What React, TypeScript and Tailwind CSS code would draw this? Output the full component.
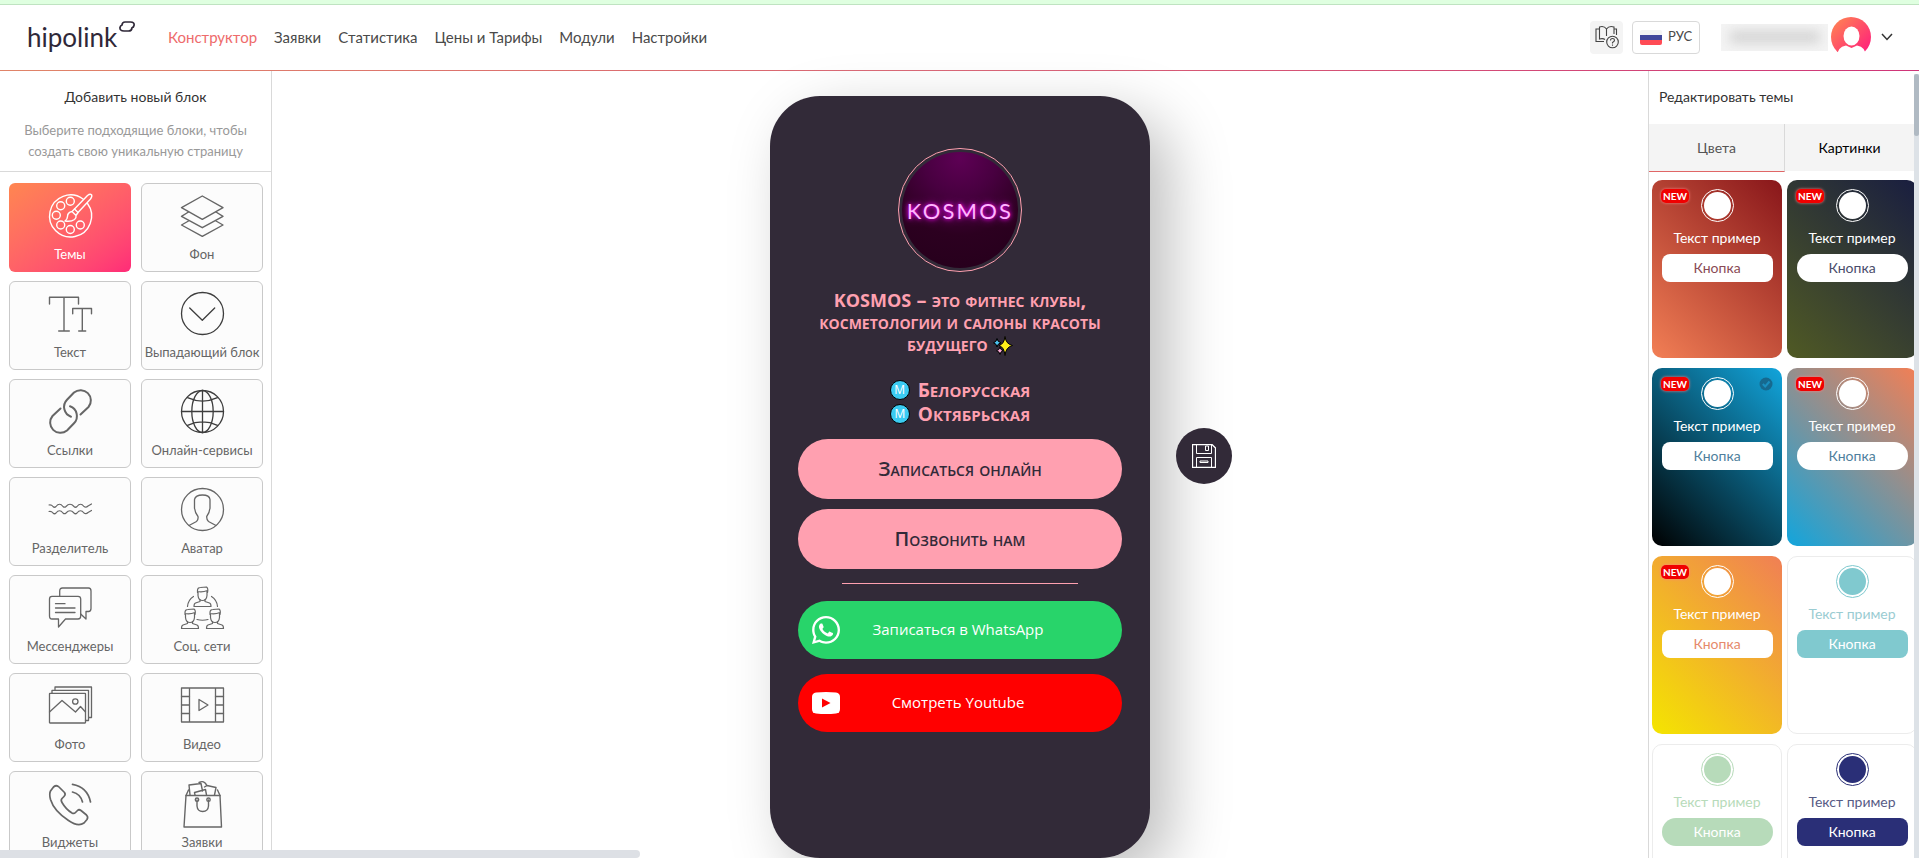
import type { ReactNode } from 'react';
import { FaWhatsapp } from 'react-icons/fa';

const navItems = ['Конструктор', 'Заявки', 'Статистика', 'Цены и Тарифы', 'Модули', 'Настройки'];

// Wrapper for all the block icons, same 43px box
function Icon({ children, width = 1.2 }: { children: ReactNode; width?: number }) {
  return (
    <svg
      viewBox="0 0 43 43"
      className="h-[43px] w-[43px] overflow-visible"
      fill="none"
      stroke="currentColor"
      strokeWidth={width}
      strokeLinecap="round"
      strokeLinejoin="round"
      aria-hidden="true"
    >
      {children}
    </svg>
  );
}

function Person({ x, y }: { x: number; y: number }) {
  return (
    <g transform={`translate(${x} ${y})`}>
      <path d="M-5 5 V3 Q-5 0 -2 0 L4 -0.5 Q6 1 5 5 M-5 4 Q0 5 5 3 M-4.5 4 V8 Q-4 13 0 13 Q4 13 4.5 8 V4" />
      <path d="M-2.5 12 V14 L-7 15.5 Q-8.5 16 -8.5 19 H8.5 Q8.5 16 7 15.5 L2.5 14 V12" />
    </g>
  );
}

const blocks: { title: string; icon: ReactNode; dark?: boolean }[] = [
  {
    title: 'Темы',
    icon: (
      <Icon width={1.4}>
        <path d="M34 5 A21 21 0 1 0 38.5 9.5" />
        <circle cx="21.3" cy="7.3" r="4" />
        <circle cx="11.7" cy="11.7" r="4" />
        <circle cx="7.3" cy="21.3" r="4" />
        <circle cx="11.7" cy="31" r="4" />
        <circle cx="21.3" cy="35.5" r="4" />
        <circle cx="31.3" cy="31" r="4" />
        <path d="M25.5 15 L38.5 1.5 Q41 -0.5 42.5 0.7 Q43.5 2.5 41.5 5 L29 18.5 Z" />
        <path d="M25.5 15 L23 17.5 L27 21.5 L29 18.5 M23 17.5 Q18.5 18.5 18.5 22.5 Q18.5 25 16 27 Q22 28 25.5 25.5 Q27.5 24 27 21.5" />
      </Icon>
    ),
  },
  {
    title: 'Фон',
    icon: (
      <Icon width={1.4}>
        <path d="M21.3 2 L42 13.7 L21.3 25.3 L0.5 13.7 Z" />
        <path d="M7.5 18 L0.5 22.3 L21.3 33.7 L42 22.3 L35 18" />
        <path d="M7.5 27 L0.5 31 L21.3 42.3 L42 31 L35 27" />
      </Icon>
    ),
  },
  {
    title: 'Текст',
    icon: (
      <Icon width={1.4}>
        <path d="M0.5 12 V5.3 H29.5 V12 M15 5.3 V39 M9.7 39 H20.3" />
        <path d="M23.7 21.7 V16.5 H42.5 V21.7 M33.3 16.5 V39 M29.7 39 H36.7" />
      </Icon>
    ),
  },
  {
    title: 'Выпадающий блок',
    dark: true,
    icon: (
      <Icon width={1.3}>
        <circle cx="21.5" cy="21.5" r="21" />
        <path d="M8.7 16 L21.3 28.3 L33.7 16" />
      </Icon>
    ),
  },
  {
    title: 'Ссылки',
    icon: (
      <Icon width={2}>
        <path d="M31.5 24.5 L39.5 17 A10.3 10.3 0 0 0 25 2.5 L18 9.8 A10.3 10.3 0 0 0 22 26.7" />
        <path d="M11.5 18.5 L3.5 26 A10.3 10.3 0 0 0 18 40.5 L25 33.2 A10.3 10.3 0 0 0 21 16.3" />
      </Icon>
    ),
  },
  {
    title: 'Онлайн-сервисы',
    dark: true,
    icon: (
      <Icon width={1.3}>
        <circle cx="21.5" cy="21.5" r="21" />
        <ellipse cx="21.5" cy="21.5" rx="10.7" ry="21" />
        <path d="M21.5 0.5 V42.5 M0.5 21.5 H42.5 M6.5 7.7 Q21.5 14.5 36.5 7.7 M6.5 35.3 Q21.5 28.5 36.5 35.3" />
      </Icon>
    ),
  },
  {
    title: 'Разделитель',
    icon: (
      <Icon>
        <path d="M0 17 Q2.5 16.5 4 18.5 Q5.5 20 7 18.5 Q10.5 14 14 18.5 Q15.5 20 17 18.5 Q21 14 25 18.5 Q26.5 20 28 18.5 Q31.5 14 35 18.5 Q37 20 39 18 L42.5 16" />
        <path d="M0 23.5 Q2.5 23 4 25 Q5.5 26.5 7 25 Q10.5 20.5 14 25 Q15.5 26.5 17 25 Q21 20.5 25 25 Q26.5 26.5 28 25 Q31.5 20.5 35 25 Q37 26.5 39 24.5 L42.5 22.5" />
      </Icon>
    ),
  },
  {
    title: 'Аватар',
    icon: (
      <Icon width={1.3}>
        <circle cx="21.5" cy="21.5" r="21" />
        <path d="M8 37.5 L15.5 33.5 Q17.5 32 17 28.5 Q14 25 13.5 20 V11.5 Q14.5 7 21.5 7 Q28.5 7 29 11.5 V20 Q28.5 25 25.7 28.5 Q25.5 32 27.5 33.5 L35 37.5" />
      </Icon>
    ),
  },
  {
    title: 'Мессенджеры',
    icon: (
      <Icon width={1.3}>
        <path d="M3 10.3 H29 Q31.7 10.3 31.7 13 V30 Q31.7 33 29 33 H16.5 L9.5 41 V33 H3 Q0.5 33 0.5 30 V13 Q0.5 10.3 3 10.3 Z" />
        <path d="M10.7 10 V5 Q10.7 2 13.5 2 H39.5 Q42 2 42 5 V22.5 Q42 25.5 39.5 25.5 H37 V33 L31.7 28" />
        <path d="M6.5 17.7 H16 M6.5 22 H26 M6.5 26.5 H26" />
      </Icon>
    ),
  },
  {
    title: 'Соц. сети',
    icon: (
      <Icon width={1.2}>
        <Person x={21.5} y={1.5} />
        <Person x={9} y={23.5} />
        <Person x={34} y={23.5} />
        <path d="M12.5 10.5 Q7 14 6.5 20.5 M30.5 10.5 Q36 14 36.5 20.5 M16 33.5 Q21.5 35 27 33.5" />
      </Icon>
    ),
  },
  {
    title: 'Фото',
    icon: (
      <Icon width={1.3}>
        <path d="M6 5.5 V3 H42.5 V33.5 H40 M3 9 V6.3 H39.5 V36.5 H36.5" />
        <rect x="0.5" y="9.3" width="36" height="29.7" rx="0.5" />
        <path d="M0.5 28 L13 16.5 L26.5 28 L31.5 22.5 L36.5 28" />
        <circle cx="26.3" cy="17.5" r="2.7" />
      </Icon>
    ),
  },
  {
    title: 'Видео',
    icon: (
      <Icon width={1.3}>
        <path d="M0.5 4 H42.5 V38 H0.5 Z M8.5 4 V38 M34.5 4 V38" />
        <path d="M0.5 12.5 H8.5 M0.5 21 H8.5 M0.5 29.5 H8.5 M34.5 12.5 H42.5 M34.5 21 H42.5 M34.5 29.5 H42.5" />
        <path d="M18 15.5 L27 21 L18 26.5 Z" />
      </Icon>
    ),
  },
  {
    title: 'Виджеты',
    icon: (
      <Icon width={1.7}>
        <path d="M4.5 5 Q7.5 2.5 10 5 L15.5 10.5 Q17 12.5 15 14.5 L13 16.5 Q11.5 18 13 20.5 Q17 27.5 23 31 Q25 32 26.5 30.5 L28.5 28.5 Q30 27 32 28.5 L37.5 33 Q39.5 35 38 37.5 L35 41 Q29 45 19.5 38.5 Q5 29 1.5 17.5 Q0 12 1.5 9 Z" />
        <path d="M23.5 10 Q31.5 12 33.5 20 M23.5 2.3 Q38.5 5 41.5 20" />
      </Icon>
    ),
  },
  {
    title: 'Заявки',
    icon: (
      <Icon width={1.4}>
        <path d="M5 13.5 H39 L40.5 45 H3 Z" />
        <path d="M5 13.5 L7.5 8 M39 13.5 L36.5 8 M9 13 L8 3 L20 1.5 L21.5 9 M14 13 L13.5 10.5 L24.5 7.5 L25.5 13 M18 0.5 Q23 -2 25.5 3 M23.5 5 L26 3.5 L35 5.5 L33.5 13" />
        <circle cx="16" cy="17.7" r="1.7" />
        <circle cx="27.5" cy="17.7" r="1.7" />
        <path d="M16 18 V24 Q16.5 29.5 21.7 29.5 Q27 29.5 27.5 24 V18" />
      </Icon>
    ),
  },
];

type Theme = {
  card: string;
  accent: string;
  text: string;
  button: string;
  isNew?: boolean;
  checked?: boolean;
};

const themes: Theme[] = [
  {
    card: 'border-transparent bg-linear-45/srgb from-[#f27f55] to-[#88161a]',
    accent: 'border-white text-white',
    text: 'text-white',
    button: 'rounded-lg bg-white text-[#8a4a55]',
    isNew: true,
  },
  {
    card: 'border-transparent bg-linear-45/srgb from-[#505a24] to-[#191e40]',
    accent: 'border-white text-white',
    text: 'text-white',
    button: 'rounded-full bg-white text-[#4a4d6b]',
    isNew: true,
  },
  {
    card: 'border-transparent bg-linear-45/srgb from-black to-[#12a5dc]',
    accent: 'border-white text-white',
    text: 'text-white',
    button: 'rounded-lg bg-white text-[#4f7f9d]',
    isNew: true,
    checked: true,
  },
  {
    card: 'border-transparent bg-linear-45/srgb from-[#12a5dc] to-[#f27f55]',
    accent: 'border-white text-white',
    text: 'text-white',
    button: 'rounded-full bg-white text-[#4f7f9d]',
    isNew: true,
  },
  {
    card: 'border-transparent bg-linear-45/srgb from-[#f4e500] to-[#f07f55]',
    accent: 'border-white text-white',
    text: 'text-white',
    button: 'rounded-lg bg-white text-[#e68a6c]',
    isNew: true,
  },
  {
    card: 'border-[#ececec] bg-white',
    accent: 'border-[#80c9cf] text-[#80c9cf]',
    text: 'text-[#9accd2]',
    button: 'rounded-lg bg-[#80c9cf] text-white',
  },
  {
    card: 'border-[#ececec] bg-white',
    accent: 'border-[#b7dbba] text-[#b7dbba]',
    text: 'text-[#b7dbba]',
    button: 'rounded-full bg-[#b7dbba] text-white',
  },
  {
    card: 'border-[#ececec] bg-white',
    accent: 'border-[#2a2f77] text-[#2a2f77]',
    text: 'text-[#575b85]',
    button: 'rounded-lg bg-[#2a2f77] text-white',
  },
];

function Header() {
  return (
    <header className="shrink-0">
      <div className="h-[5px] border-b border-[#bfe3c1] bg-[#dfffe0]" />
      <div className="flex h-[65px] items-center pr-[26px] pb-px pl-[27px]">
        <a href="#" className="flex w-[141px] items-start text-[26px] leading-8 text-[#2f2838]">
          hipolink
          <svg viewBox="0 0 16 11" className="ml-0.5 h-[11px] w-4 shrink-0" fill="none" stroke="currentColor" strokeWidth="1.7" aria-hidden="true">
            <path d="M6 1 H11.5 C14.5 1 15.5 2.5 15 4.5 C14.7 6 14 6.500 13 6.800 C12.800 9 11.500 10 9.500 10 H5 C2 10 0.700 8.500 1 6.500 C1.200 5 2 4.300 3 4 C3.200 2 4.200 1 6 1 Z" />
          </svg>
        </a>
        <nav className="flex gap-[17px] text-[15px] text-[#4a4a4a]">
          {navItems.map((item, i) => (
            <a key={item} href="#" className={i === 0 ? 'text-[#ee6b6b]' : ''}>
              {item}
            </a>
          ))}
        </nav>

        <div className="ml-auto flex items-center">
          <button aria-label="Инструкция" className="flex h-[33px] w-[33px] items-center justify-center rounded bg-[#f4f4f4] text-[#444]">
            <svg viewBox="0 0 24 24" className="h-6 w-6" fill="none" stroke="currentColor" strokeWidth="1.1" aria-hidden="true">
              <path d="M11.5 4 Q9 0.5 4.5 2 V14 Q8 13 10 14.5 M11.5 4 Q14 0.5 19 2 V9 M11.5 4 V11 M4.5 4 H1 V16.5 H9 M19 4 H21.5 V10" />
              <circle cx="17.5" cy="17" r="5.8" />
              <path d="M15.5 15.5 Q15.5 13.5 17.5 13.5 Q19.5 13.5 19.5 15.3 Q19.5 16.5 17.5 17.5 V18.5 M17.5 19.5 V20.7" />
            </svg>
          </button>
          <button className="ml-[9px] flex h-[33px] w-[68px] items-center gap-1.5 rounded border border-[#d9d9d9] pl-[7px] text-[13px] text-[#4a4a4a]">
            <span className="flex h-[15px] w-[22px] flex-col overflow-hidden rounded-xs">
              <span className="flex-1 bg-[#f3f3f3]" />
              <span className="flex-1 bg-[#41479b]" />
              <span className="flex-1 bg-[#ff4b55]" />
            </span>
            РУС
          </button>
          {/* hidden account name */}
          <div className="ml-[21px] flex h-[27px] w-[107px] items-center justify-center overflow-hidden bg-[#f4f4f4]">
            <span className="h-3 w-[90px] bg-[#d3d3d3] blur-[6px]" />
          </div>
          <button aria-label="Профиль" className="ml-[3px] flex items-center gap-2.5 text-[#333]">
            <svg viewBox="0 0 40 40" className="h-10 w-10" aria-hidden="true">
              <defs>
                <linearGradient id="user" x1="0" y1="0" x2="1" y2="1">
                  <stop offset="0" stopColor="#ff8a50" />
                  <stop offset="1" stopColor="#ff1480" />
                </linearGradient>
              </defs>
              <circle cx="20" cy="20" r="20" fill="url(#user)" />
              <ellipse cx="20.5" cy="19" rx="8" ry="9.5" fill="#fff" />
              <path d="M6 40 Q6 30 15 28.5 L20.5 31 L26 28.5 Q35 30 35 40 Z" fill="#fff" />
            </svg>
            <svg viewBox="0 0 12 8" className="h-2 w-3" fill="none" stroke="currentColor" strokeWidth="1.5" aria-hidden="true">
              <path d="M1 1 L6 6.5 L11 1" />
            </svg>
          </button>
        </div>
      </div>
      <div className="h-px bg-linear-to-r from-[#e08468] to-[#cf3579]" />
    </header>
  );
}

function Sidebar() {
  return (
    <aside className="w-[272px] shrink-0 border-r border-[#d9d9d9]">
      <div className="h-[101px] border-b border-[#d9d9d9] pt-3.5 text-center">
        <h2 className="text-sm leading-6 text-[#333]">Добавить новый блок</h2>
        <p className="mt-[11px] px-5 text-[13px] leading-[21px] text-[#999]">
          Выберите подходящие блоки, чтобы создать свою уникальную страницу
        </p>
      </div>
      <div className="grid grid-cols-2 gap-x-2.5 gap-y-[9px] pt-[11px] pr-2 pl-[9px]">
        {blocks.map(({ title, icon, dark }, i) => (
          <button
            key={title}
            className={`flex h-[89px] flex-col items-center rounded-md border pt-[10px] ${
              i === 0
                ? 'border-transparent bg-linear-to-br from-[#ff8650] to-[#ff2a78] bg-origin-border text-white'
                : 'border-[#c9c9c9] bg-[#fcfcfc] text-[#666]'
            }`}
          >
            <span className={dark ? 'text-[#3d3d3d]' : ''}>{icon}</span>
            <span className="mt-[7px] text-[13px] leading-5 whitespace-nowrap">{title}</span>
          </button>
        ))}
      </div>
    </aside>
  );
}

function Metro({ name }: { name: string }) {
  return (
    <div className="flex h-6 items-center justify-center gap-2 leading-6">
      <span className="flex h-5 w-5 items-center justify-center rounded-full border border-black bg-[#3bcbf2] text-xs font-normal text-white [font-variant:normal]">
        M
      </span>
      <span className="inline-block text-[21px] first-letter:text-[19px]">{name}</span>
    </div>
  );
}

function Preview() {
  return (
    <main className="flex min-w-0 flex-1 justify-center pt-[25px]">
      <div className="relative">
        <div className="flex h-full w-[380px] flex-col items-center rounded-[50px] bg-[#322a38] px-7 pt-[52px] shadow-[20px_20px_60px_#bebebe]">
          <div className="h-[124px] w-[124px] shrink-0 rounded-full border border-[#ffa0b0] p-[3px]">
            <div className="flex h-full items-center justify-center rounded-full bg-[radial-gradient(circle_at_50%_5%,#5e0055_0%,#480040_30%,#2c0020_62%,#25001b_100%)] font-['Lato'] text-[22px] tracking-widest text-[#ffb5ff] [text-shadow:0_0_4px_#f0f,0_0_9px_#c000c0]">
              KOSMOS
            </div>
          </div>

          <div className="mt-[17px] text-center font-['Open_Sans',sans-serif] text-[20px] font-bold whitespace-nowrap text-[#ffa0b0] [font-variant:small-caps]">
            <p className="leading-[22px]">
              <span className="text-[18px]">KOSMOS</span> – это фитнес клубы,
              <br />
              косметологии и салоны красоты
              <br />
              будущего{' '}
              <svg viewBox="0 0 20 20" className="inline h-5 w-5 align-middle" stroke="#000" strokeWidth="1" aria-label="sparkles">
                <path d="M12 0.5 Q12.8 8 19.5 9.5 Q12.8 11 12 19.5 Q11.2 11 6 9.5 Q11.2 8 12 0.5 Z" fill="#ffef1a" />
                <path d="M4 2.5 Q4.5 6 8 6.8 Q4.5 7.5 4 11 Q3.5 7.5 0.5 6.8 Q3.5 6 4 2.5 Z" fill="#4cc3f0" />
                <path d="M7 11 Q7.5 14 10 14.7 Q7.5 15.5 7 18.5 Q6.5 15.5 3.5 14.7 Q6.5 14 7 11 Z" fill="#f9a8d4" />
              </svg>
            </p>
            <div className="mt-[22px]">
              <Metro name="Белорусская" />
              <Metro name="Октябрьская" />
            </div>
          </div>

          <div className="mt-[13px] flex w-full flex-col gap-2.5 font-['Open_Sans',sans-serif] text-[20px] font-semibold text-[#322a38]">
            <button className="h-[60px] rounded-full bg-[#ffa0b0] [font-variant:small-caps]">Записаться онлайн</button>
            <button className="h-[60px] rounded-full bg-[#ffa0b0] [font-variant:small-caps]">Позвонить нам</button>
          </div>

          <hr className="mt-3.5 mb-[17px] w-[236px] border-[#ffa0b0]" />

          <div className="flex w-full flex-col gap-[15px] font-['Open_Sans',sans-serif] text-[15px] text-white">
            <button className="flex h-[58px] items-center rounded-full bg-[#28d46a] px-3.5">
              <FaWhatsapp className="h-8 w-7 shrink-0" />
              <span className="flex-1 pr-8">Записаться в WhatsApp</span>
            </button>
            <button className="flex h-[58px] items-center rounded-full bg-[#ff0000] px-3.5">
              <svg viewBox="0 0 28 22" className="h-[22px] w-7 shrink-0" aria-hidden="true">
                <path d="M4 0.5 Q14 -0.5 24 0.5 Q28 1 28 5 V17 Q28 21 24 21.5 Q14 22.5 4 21.5 Q0 21 0 17 V5 Q0 1 4 0.5 Z" fill="#fff" />
                <path d="M10 6.5 L18.5 11 L10 15.5 Z" fill="#f00" />
              </svg>
              <span className="flex-1 pr-8">Смотреть Youtube</span>
            </button>
          </div>
        </div>

        <button
          aria-label="Сохранить"
          className="absolute top-[332px] left-full ml-[26px] flex h-14 w-14 items-center justify-center rounded-full bg-[#322a38] text-white"
        >
          <svg viewBox="0 0 24 24" className="h-6 w-6" fill="none" stroke="currentColor" aria-hidden="true">
            <path d="M0.5 0.5 H20 L23.5 4 V23.5 H0.5 Z" strokeWidth="1.3" />
            <path d="M4.5 0.5 V9.5 H19.5 V0.5 M13.5 2 H16.5 V6.5 H13.5 Z M4.5 23.5 V13.5 H19.5 V23.5 M8 17 H16 V18.5 H8 Z" />
          </svg>
        </button>
      </div>
    </main>
  );
}

function ThemeCard({ theme }: { theme: Theme }) {
  return (
    <div className={`relative flex h-[178px] w-[130px] flex-col items-center rounded-[10px] border bg-origin-border pt-2 ${theme.card}`}>
      {theme.isNew && (
        <span className="absolute top-2 left-2 flex h-3.5 w-7 items-center justify-center rounded-[5px] bg-[#f00000] text-[10px] font-bold text-white shadow-[0_0_3px_#ff8080]">
          NEW
        </span>
      )}
      {theme.checked && (
        <svg viewBox="0 0 14 14" className="absolute top-2 right-2 h-3.5 w-3.5" aria-hidden="true">
          <circle cx="7" cy="7" r="6.5" fill="#16698f" />
          <path d="M3.8 7 L6.2 9.5 L10.5 4.5" fill="none" stroke="#1a8fc0" strokeWidth="2" />
        </svg>
      )}
      <span className={`flex h-[33px] w-[33px] items-center justify-center rounded-full border ${theme.accent}`}>
        <span className="h-[27px] w-[27px] rounded-full bg-current" />
      </span>
      <p className={`mt-1.5 text-sm leading-5 ${theme.text}`}>Текст пример</p>
      <button className={`mt-1.5 h-7 w-[111px] text-sm ${theme.button}`}>Кнопка</button>
    </div>
  );
}

function ThemePanel() {
  return (
    <aside className="flex w-[271px] shrink-0 border-l border-[#d9d9d9]">
      <div className="min-w-0 flex-1 overflow-hidden">
        <h2 className="pt-3.5 pl-2.5 text-sm leading-6 text-[#333]">Редактировать темы</h2>
        <div className="mt-[15px] flex h-12 bg-[#f4f4f4] text-sm">
          <button className="w-[136px] border-r border-b border-r-[#d9d9d9] border-b-[#e06666] text-[#555]">Цвета</button>
          <button className="flex-1 border-b border-white text-black">Картинки</button>
        </div>
        <div className="grid w-[268px] grid-cols-2 gap-x-[5px] gap-y-2.5 pt-2 pl-[3px]">
          {themes.map((theme, i) => (
            <ThemeCard key={i} theme={theme} />
          ))}
        </div>
      </div>
      {/* panel scrollbar */}
      <div className="mt-[3px] w-[5px] bg-[#dde2e7]">
        <div className="h-[62px] rounded-full bg-[#b0bac3]" />
      </div>
    </aside>
  );
}

export default function App() {
  return (
    <div className="relative flex h-screen flex-col overflow-hidden bg-white font-['Lato',sans-serif]">
      <Header />
      <div className="flex min-h-0 flex-1">
        <Sidebar />
        <Preview />
        <ThemePanel />
      </div>
      {/* horizontal page scrollbar lies over the content */}
      <div className="absolute bottom-0 left-0 h-2 w-1/3 rounded-r-full bg-[#dde0e5]" />
    </div>
  );
}
